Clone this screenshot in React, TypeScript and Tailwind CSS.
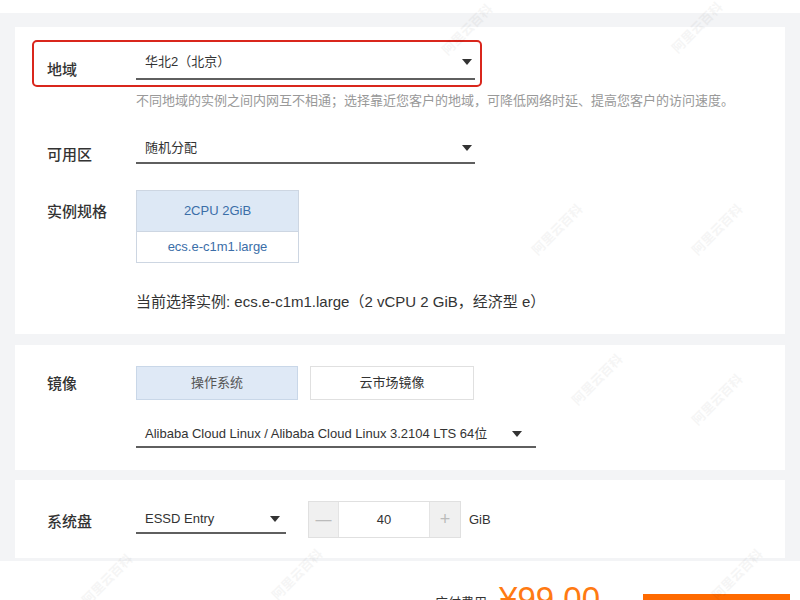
import type { ReactNode } from "react";

const font = { fontFamily: '"Liberation Sans", "Noto Sans CJK SC", sans-serif' };

function Caret() {
  return (
    <svg width="10" height="6" viewBox="0 0 10 6" aria-hidden="true">
      <path d="M0 0h10L5 6z" fill="#333" />
    </svg>
  );
}

function Select({ value, className = "" }: { value: string; className?: string }) {
  return (
    <div className={`flex items-start justify-between border-b-2 border-[#5f5f5f] pl-[9px] ${className}`}>
      <span className="text-[13px] leading-[20px] text-[#333]">{value}</span>
      <span className="mt-[7px]">
        <Caret />
      </span>
    </div>
  );
}

function Label({ children, className = "" }: { children: ReactNode; className?: string }) {
  return (
    <div className={`w-[89px] shrink-0 text-[15px] leading-[22px] font-medium text-[#333] ${className}`}>
      {children}
    </div>
  );
}

// faint diagonal watermark, placed in empty spots
const marks = [
  [470, 30], [700, 28], [560, 230], [720, 230], [720, 400], [600, 380], [300, 575], [110, 580], [740, 575],
];

export default function App() {
  return (
    <div className="relative h-[600px] w-[800px] overflow-hidden bg-white" style={font}>
      <div className="h-[13px] bg-white" />
      <div className="bg-[#f3f4f6] px-[15px] pt-[14px] pb-[3px]">
        {/* card 1 */}
        <section className="bg-white pt-[13px] pl-[17px] pb-[22px]">
          <div className="flex w-[450px] h-[47px] items-start rounded-[5px] border-2 border-[#d9261c] pl-[13px]">
            <Label className="mt-[17px]">地域</Label>
            <Select value="华北2（北京）" className="mt-[10px] h-[28px] w-[339px] pr-[3px]" />
          </div>
          <p className="ml-[104px] mt-[5px] text-[13px] leading-[18px] text-[#999]">
            不同地域的实例之间内网互不相通；选择靠近您客户的地域，可降低网络时延、提高您客户的访问速度。
          </p>

          <div className="mt-[28px] flex pl-[15px]">
            <Label className="mt-[6px]">可用区</Label>
            <Select value="随机分配" className="h-[26px] w-[339px] pr-[3px]" />
          </div>

          <div className="mt-[24px] flex pl-[15px]">
            <Label className="mt-[11px]">实例规格</Label>
            <div className="w-[163px] border border-[#cdd6e2] text-center text-[13px] text-[#3b6ea8]">
              <div className="h-[41px] border-b border-[#cdd6e2] bg-[#dde8f5] leading-[40px]">2CPU 2GiB</div>
              <div className="h-[30px] leading-[30px]">ecs.e-c1m1.large</div>
            </div>
          </div>

          <p className="ml-[104px] mt-[29px] text-[15px] leading-[20px] text-[#333]">
            当前选择实例: ecs.e-c1m1.large（2 vCPU 2 GiB，经济型 e）
          </p>
        </section>

        {/* card 2 */}
        <section className="mt-[11px] bg-white pt-[21px] pl-[32px] pb-[22px]">
          <div className="flex items-center">
            <Label className="mt-[2px]">镜像</Label>
            <div className="flex gap-[12px] text-[13px]">
              <div className="flex h-[34px] w-[162px] items-center justify-center border border-[#c9d7e8] bg-[#dfe9f6] text-[#555]">
                操作系统
              </div>
              <div className="flex h-[34px] w-[164px] items-center justify-center border border-[#e0e0e0] bg-white text-[#333]">
                云市场镜像
              </div>
            </div>
          </div>
          <div className="mt-[24px] flex">
            <div className="w-[89px] shrink-0" />
            <Select
              value="Alibaba Cloud Linux / Alibaba Cloud Linux 3.2104 LTS 64位"
              className="h-[24px] w-[400px] pr-[14px]"
            />
          </div>
        </section>

        {/* card 3 */}
        <section className="mt-[10px] bg-white pt-[21px] pl-[32px] pb-[20px]">
          <div className="flex items-center">
            <Label className="mt-[4px]">系统盘</Label>
            <Select value="ESSD Entry" className="mt-[4px] h-[25px] w-[150px] pr-[6px]" />
            <div className="ml-[22px] flex h-[37px] border border-[#e0e0e0] text-[13px]">
              <div className="flex w-[30px] items-center justify-center border-r border-[#e4e4e4] bg-[#f0f0f0] text-[16px] text-[#bbb]">
                —
              </div>
              <div className="flex w-[90px] items-center justify-center bg-white text-[#333]">40</div>
              <div className="flex w-[31px] items-center justify-center border-l border-[#e4e4e4] bg-[#f0f0f0] text-[18px] font-light text-[#bbb]">
                +
              </div>
            </div>
            <span className="ml-[8px] text-[13px] text-[#333]">GiB</span>
          </div>
        </section>
      </div>

      {/* bottom bar */}
      <div className="flex h-[60px] items-start justify-end bg-white pr-[10px]">
        <span className="mt-[33px] text-[13px] leading-[18px] text-[#333]">应付费用</span>
        <span className="ml-[12px] mt-[19px] text-[33px] font-light leading-[38px] text-[#ff7a12]">¥99.00</span>
        <div className="ml-[43px] mt-[33px] h-[40px] w-[147px] bg-[#ff6a00]" />
      </div>

      {marks.map(([x, y], i) => (
        <span
          key={i}
          aria-hidden="true"
          className="pointer-events-none absolute -rotate-45 select-none text-[13px] font-bold text-[#000] opacity-[0.035]"
          style={{ left: x - 35, top: y - 10 }}
        >
          阿里云百科
        </span>
      ))}
    </div>
  );
}
